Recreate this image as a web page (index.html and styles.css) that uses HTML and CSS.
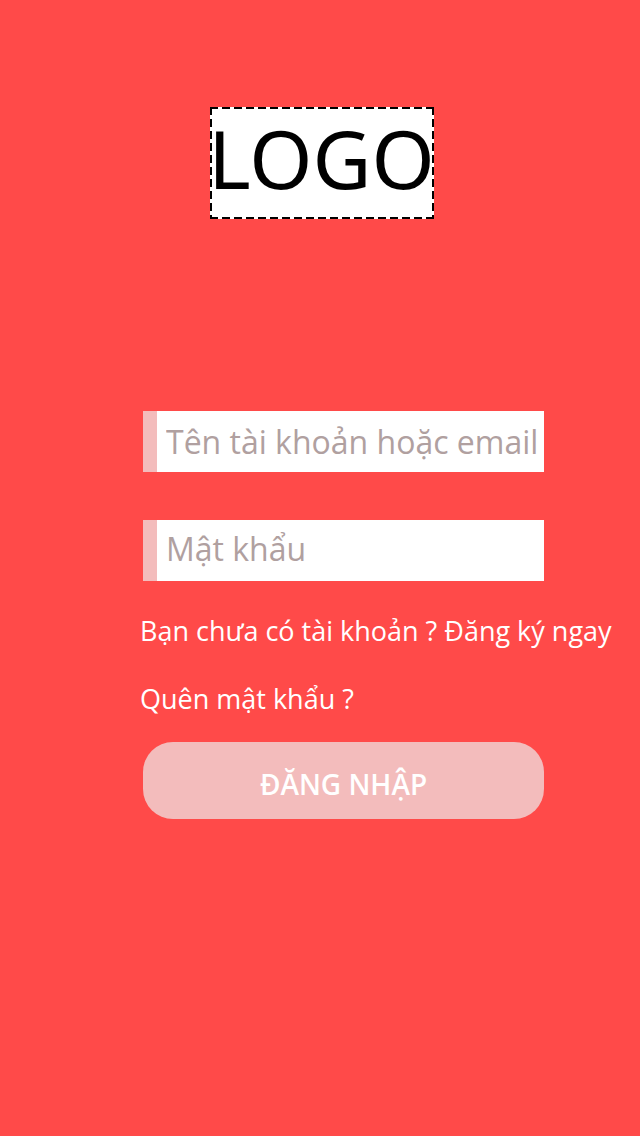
FILE: index.html
```html
<!DOCTYPE html>
<html lang="vi">
<head>
<meta charset="utf-8">
<meta name="viewport" content="width=device-width, initial-scale=1">
<title>Đăng nhập</title>
<link rel="stylesheet" href="styles.css">
</head>
<body>
<main class="login">
  <h1 class="logo">LOGO</h1>
  <form class="form">
    <input class="field" type="text" aria-label="Tên tài khoản hoặc email" placeholder="Tên tài khoản hoặc email">
    <input class="field" type="password" aria-label="Mật khẩu" placeholder="Mật khẩu">
    <nav class="links">
      <a class="link" href="#register">Bạn chưa có tài khoản ? Đăng ký ngay</a>
      <a class="link" href="#forgot">Quên mật khẩu ?</a>
    </nav>
    <button class="submit" type="submit">ĐĂNG NHẬP</button>
  </form>
</main>
</body>
</html>
```
FILE: styles.css
```css
* {
  box-sizing: border-box;
}

body {
  margin: 0;
  min-height: 100vh;
  background: #ff4a49;
  font-family: "Open Sans", "Noto Sans", sans-serif;
}

.login {
  display: flex;
  flex-direction: column;
  padding: 107px 96px 0 143px;
}

.logo {
  --dash-x: repeating-linear-gradient(90deg, #000 0 8px, #fff 8px 12px);
  --dash-y: repeating-linear-gradient(180deg, #000 0 8px, #fff 8px 12px);
  display: flex;
  justify-content: center;
  align-self: center;
  width: 224px;
  margin: 0 44px 192px 0;
  padding: 0 0 10px;
  background:
    var(--dash-x) top / 100% 2px no-repeat,
    var(--dash-x) bottom / 100% 2px no-repeat,
    var(--dash-y) left / 2px 100% no-repeat,
    var(--dash-y) right / 2px 100% no-repeat,
    #fff;
  color: #000;
  font-family: "Noto Sans", sans-serif;
  font-size: 81px;
  font-weight: 400;
  line-height: 102px;
}

.form {
  display: flex;
  flex-direction: column;
}

.field {
  width: 100%;
  height: 61px;
  margin: 0 0 48px;
  padding: 0 0 0 9px;
  border: 0;
  border-left: 14px solid #f3bcbc;
  border-radius: 0;
  background: #fff;
  color: #b0a0a0;
  font-family: inherit;
  font-size: 32px;
}

.field:last-of-type {
  margin-bottom: 30px;
  padding-bottom: 4px;
}

.field::placeholder {
  color: #b0a0a0;
  opacity: 1;
}

.links {
  display: flex;
  flex-direction: column;
  align-items: flex-start;
  gap: 28px;
  margin: 0 0 23px -3px;
}

.link {
  color: #fff;
  font-size: 27px;
  line-height: 40px;
  white-space: nowrap;
  text-decoration: none;
}

.submit {
  height: 77px;
  padding: 6px 0 0;
  border: 0;
  border-radius: 30px;
  background: #f3bcbc;
  color: #fff;
  font-family: inherit;
  font-size: 28px;
  font-weight: 600;
}
```
